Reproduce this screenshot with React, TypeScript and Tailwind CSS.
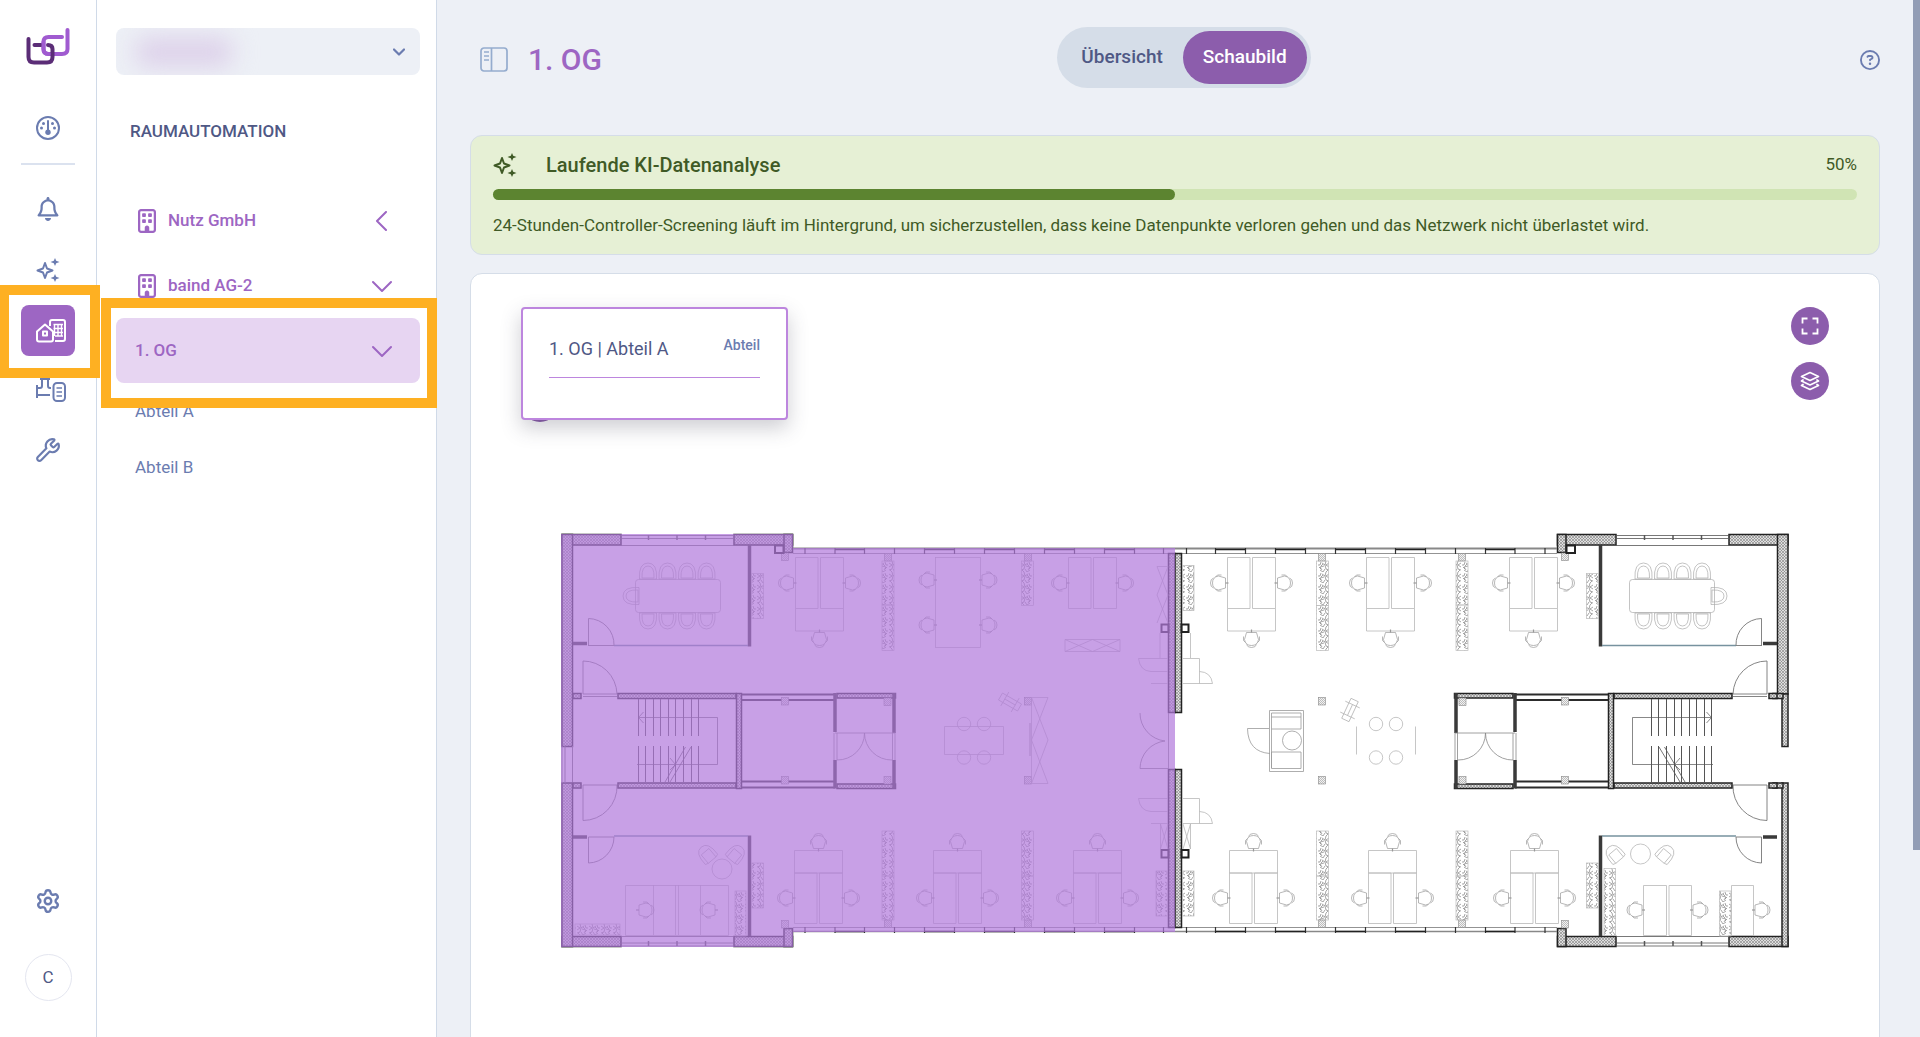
import type { ReactNode } from "react";
import { Settings, Wrench } from "lucide-react";
import { FaRegBell, FaRegBuilding, FaRegCircleQuestion } from "react-icons/fa6";

const Logo = () => (
    <svg width="44" height="38" viewBox="0 0 44 38" fill="none" strokeWidth="4" strokeLinecap="round" strokeLinejoin="round">
        <path d="M36 9H22.500Q17.500 9 17.500 14V21Q17.500 26 22.500 26H36Q41.500 26 41.500 21V2" stroke="#a05bd0" />
        <path d="M2.500 11V29Q2.500 34.500 8 34.500H21Q26.500 34.500 26.500 29V21Q26.500 17 22 17" stroke="#5b2d77" />
        <path d="M8.500 17H15" stroke="#5b2d77" />
        <path d="M17.500 14V21Q17.500 26 22.500 26" stroke="#a05bd0" />
    </svg>
);

const GaugeIcon = () => (
    <svg width="24" height="24" viewBox="0 0 24 24" fill="none" stroke="currentColor">
        <circle cx="12" cy="12" r="11" strokeWidth="2" />
        <path d="M12 5v10" strokeWidth="2" strokeLinecap="round" />
        <g fill="currentColor" stroke="none">
            <circle cx="12" cy="16.200" r="2.700" />
            <circle cx="7.500" cy="7.500" r="1.500" />
            <circle cx="16.500" cy="7.500" r="1.500" />
            <circle cx="5.500" cy="12" r="1.500" />
            <circle cx="18.500" cy="12" r="1.500" />
        </g>
    </svg>
);

const SparklesIcon = () => (
    <svg width="24" height="24" viewBox="0 0 24 24" fill="none" stroke="currentColor" strokeLinejoin="round">
        <path d="M9 5 L11 10.500 L16.500 12.500 L11 14.500 L9 20 L7 14.500 L1.500 12.500 L7 10.500 Z" strokeWidth="2" />
        <g fill="currentColor" stroke="none">
            <path d="M19 0l1.200 2.800L23.500 4l-3.300 1.200L19 8l-1.200-2.800L14.500 4l3.300-1.200z" />
            <path d="M19 16l1.200 2.800 3.300 1.200-3.300 1.200L19 24l-1.200-2.800-3.300-1.200 3.300-1.200z" />
        </g>
    </svg>
);

const HomesIcon = () => (
    <svg width="30" height="24" viewBox="0 0 30 24" fill="none" stroke="currentColor" strokeWidth="2" strokeLinejoin="round">
        <path d="M14 7V3q0-2 2-2h11q2 0 2 2v17q0 2-2 2h-8" />
        <path d="M1 12.500L9 5.500L17 12.500V20.500Q17 22.500 15 22.500H3Q1 22.500 1 20.500Z" />
        <rect x="7" y="12.500" width="4" height="4" />
        <path d="M18.500 5v12M22 5v12M25.500 5v12M17.500 5.500H27M17.500 9.500H27M17.500 13.500H27M19 17H27" strokeWidth="1.400" />
    </svg>
);

const DevicesIcon = () => (
    <svg width="30" height="24" viewBox="0 0 30 24" fill="none" stroke="currentColor" strokeWidth="2">
        <path d="M4 1h10M6 1v7q0 2-2 2H1.500M12 1v7q0 2 2 2h1M1 7v13M1 17h13" />
        <rect x="17.500" y="5" width="11.500" height="18" rx="3.500" />
        <path d="M20.500 10h5.500M20.500 14h5.500M20.500 18h5.500" strokeWidth="1.700" />
    </svg>
);

const SidebarIcon = () => (
    <svg width="28" height="25" viewBox="0 0 28 25" fill="none" stroke="#95acce" strokeWidth="1.700">
        <rect x="1" y="1" width="26" height="23" rx="3" />
        <path d="M11.500 1v23M4 5h5M4 9h5M4 13h5" />
    </svg>
);

const FullscreenIcon = () => (
    <svg width="18" height="18" viewBox="0 0 18 18" fill="none" stroke="currentColor" strokeWidth="1.800">
        <path d="M1.500 6.500V1.500H6.500M11.500 1.500H16.500V6.500M16.500 11.500V16.500H11.500M6.500 16.500H1.500V11.500" />
    </svg>
);

const LayersIcon = () => (
    <svg width="20" height="20" viewBox="0 0 20 20" fill="none" stroke="currentColor" strokeWidth="1.700" strokeLinejoin="round" strokeLinecap="round">
        <path d="M10 1.500L18.500 5.500L10 9.500L1.500 5.500Z" />
        <path d="M3 9L1.500 10L10 14L18.500 10L17 9" />
        <path d="M3 13.500L1.500 14.500L10 18.500L18.500 14.500L17 13.500" />
    </svg>
);

const Chevron = ({ open }: { open: boolean }) => (
    <svg width="20" height="20" viewBox="0 0 20 20" fill="none" stroke="currentColor" strokeWidth="2" strokeLinecap="round" strokeLinejoin="round">
        <path d={open ? "M1 6L10 15L19 6" : "M14 1L5 10L14 19"} />
    </svg>
);

/* ---------- floor plan ---------- */

type Box = { x: number; y: number; w: number; h: number };

const Wall = ({ x, y, w, h }: Box) => (
    <rect x={x} y={y} width={w} height={h} fill="url(#hatch)" stroke="#222" strokeWidth="1.500" />
);

const Column = ({ x, y }: { x: number; y: number }) => (
    <rect x={x} y={y} width="7" height="7.500" fill="url(#diag)" stroke="#888" strokeWidth=".6" />
);

const Plants = ({ x, y, w, h }: Box) => (
    <rect x={x} y={y} width={w} height={h} fill="url(#plants)" stroke="#bbb" strokeWidth=".7" />
);

const Chair = ({ x, y, r = 0 }: { x: number; y: number; r?: number }) => (
    <g transform={`translate(${x} ${y}) rotate(${r})`} stroke="#999" strokeWidth=".7">
        <path d="M-5 -6H5L7 1Q6 7 0 7Q-6 7 -7 1Z" />
        <path d="M-5 6Q-4 9 0 9Q4 9 5 6M-8 -2Q-9 3 -6 4M8 -2Q9 3 6 4" />
        <path d="M0 -6V-9" strokeWidth="1.200" />
    </g>
);

const SeatU = ({ x, y, r = 0 }: { x: number; y: number; r?: number }) => (
    <g transform={`translate(${x} ${y}) rotate(${r})`}>
        <path d="M-8.500 8Q-9.500 -8 0 -8Q9.500 -8 8.500 8Z" />
        <path d="M-6 7Q-6.500 -5 0 -5Q6.500 -5 6 7Z" />
    </g>
);

const ArmChair = ({ x, y, r }: { x: number; y: number; r: number }) => (
    <g transform={`translate(${x} ${y}) rotate(${r})`}>
        <path d="M-8 7Q-9 -9 0 -9Q9 -9 8 7L5 8V-3H-5V8Z" />
        <path d="M-5 8H5" />
    </g>
);

const DeskTop = ({ x, front = true }: { x: number; front?: boolean }) => (
    <g>
        <path d={`M${x} 557.500h22.500v51h-22.500zM${x + 25} 557.500h23v51h-23z`} />
        {front && <path d={`M${x} 608.500v22.500h48v-22.500`} />}
        <Chair x={x - 8} y={583} r={90} />
        <Chair x={x + 56} y={583} r={-90} />
        {front && <Chair x={x + 24} y={638.5} />}
    </g>
);

const DeskBottom = ({ x }: { x: number }) => (
    <g>
        <path d={`M${x} 850.500h48v22.500h-48zM${x} 873h22.500v50.500h-22.500zM${x + 25} 873h23v50.500h-23z`} />
        <Chair x={x - 8} y={898} r={90} />
        <Chair x={x + 56} y={898} r={-90} />
        <Chair x={x + 24} y={842.5} r={180} />
    </g>
);

const Stairs = () => (
    <g stroke="#555" strokeWidth="1">
        {[638.5, 645.5, 653.5, 660.5, 668.5, 675.5, 683.5, 691.5, 698.5].map((x) => (
            <path key={x} d={`M${x} 699V736M${x} 746V782`} />
        ))}
        <path d="M717.500 764.500V717.500H638.500M643.500 712L638.500 717.500L643.500 723M637 764.500H717.500M670 758L675.500 764.500L670 770" strokeWidth=".7" />
        <path d="M665 782L685.500 747M670 782L691 747" strokeWidth=".8" />
    </g>
);

const facadeMarks = [805, 835, 864.5, 894.5, 924.5, 954.5, 984.5, 1014.5, 1044.5, 1074.5, 1104.5, 1134.5, 1163.5];
const facadeDark = [835, 924.5, 984.5, 1044.5, 1104.5];

// One wing of the building; the other one is the same wing mirrored.
// thin: slimmer outer wall around the staircase and below it
const Wing = ({ thin, children }: { thin?: boolean; children?: ReactNode }) => (
    <g>
        <Wall x={562} y={534.5} w={59} h={10.5} />
        <Wall x={734} y={534.5} w={58.5} h={10.5} />
        <Wall x={562} y={936.5} w={59} h={10} />
        <Wall x={734} y={936.5} w={58.5} h={10} />
        {thin ? (
            <>
                <Wall x={562} y={534.5} w={10.5} h={159.5} />
                <Wall x={562} y={694} w={6} h={52.5} />
                <Wall x={562} y={783} w={6} h={163.5} />
                <Wall x={567} y={693.5} w={10} h={5} />
                <Wall x={567} y={783} w={10} h={5} />
            </>
        ) : (
            <>
                <Wall x={562} y={534.5} w={10.5} h={212} />
                <Wall x={562} y={783} w={10.5} h={163.5} />
                <path d="M562 746V783M565 746V783M572.500 746V783" stroke="#777" strokeWidth="1" />
            </>
        )}
        <Wall x={784} y={534.5} w={8.5} h={18} />
        <Wall x={784} y={928.5} w={8.5} h={18} />
        <Column x={781.5} y={553} />
        <Column x={781.5} y={920.5} />
        <rect x="775" y="545.500" width="8.500" height="7.500" stroke="#222" strokeWidth="2" />

        <g stroke="#555" strokeWidth=".8">
            <path d="M621 535.500H734M621 538.500H734M621 545.500H734M621 936.500H734M621 943H734M621 946H734" />
            <path d="M648.500 535v5M677 535v5M705.500 535v5M648.500 941v5M677 941v5M705.500 941v5" strokeWidth="1.500" />
        </g>
        <path d="M793 548.500H1175" stroke="#888" strokeWidth="2" />
        <path d="M793 553.500H1175M793 927.500H1175" stroke="#777" strokeWidth=".8" />
        <path d="M793 931.500H1175" stroke="#888" strokeWidth="1.700" />
        {facadeMarks.map((x) => (
            <path key={x} d={`M${x} 548V554M${x} 927V933`} stroke="#333" strokeWidth="1.200" />
        ))}
        {facadeDark.map((x) => (
            <path key={x} d={`M${x} 549.500h30M${x} 931.500h30`} stroke="#222" strokeWidth="1.600" />
        ))}

        <path d="M749.500 545V646.500M749.500 835.500V936" stroke="#3a3a3a" strokeWidth="3.500" />
        <path d="M614 645.500H748M614 836H748" stroke="#77929f" strokeWidth="1.600" />
        <path d="M573 643.500H587M573 837H587" stroke="#3a3a3a" strokeWidth="3.500" />
        <path
            d="M588.500 646V618.500A26 26 0 0 1 614 645.500M588.500 645.500H614M583 694V661A34 34 0 0 1 617 694M583 694H617M583 696.500H617M583 785V820.500A34 34 0 0 0 617 785M583 785H617M588.500 837V863A26 26 0 0 0 614 837M588.500 837H614"
            stroke="#777"
            strokeWidth=".9"
        />

        <Wall x={573} y={693.5} w={8} h={5} />
        <Wall x={618} y={693.5} w={118} h={5} />
        <Wall x={573} y={783} w={8} h={5} />
        <Wall x={618} y={783} w={118} h={5} />
        <Wall x={736.5} y={693.5} w={5} h={95} />
        <path d="M742 694.500H835M742 700H835M742 781.500H835M742 787.500H835" stroke="#2c2c2c" strokeWidth="1.900" />
        <Wall x={837} y={693.5} w={58.5} h={4.5} />
        <Wall x={837} y={784} w={58.5} h={4.5} />
        <path d="M835 693V732M835 760V788.500M894 693V733M894 760V788.500" stroke="#3a3a3a" strokeWidth="3.500" />
        <path
            d="M835 733H895M864.500 733A27 27 0 0 1 837 760M864.500 733A27 27 0 0 0 892 760M834 733V760M837 733V760M892.500 733V760M895 733V760"
            stroke="#888"
            strokeWidth=".8"
        />
        <Column x={781.5} y={697.5} />
        <Column x={781.5} y={776.5} />
        <Column x={884} y={698} />
        <Column x={884} y={776.5} />
        <Column x={884.5} y={553.5} />
        <Column x={884.5} y={920} />
        <Column x={1024.5} y={553.5} />
        <Column x={1024.5} y={920} />
        <Column x={1024.5} y={697.5} />
        <Column x={1024.5} y={776.5} />
        <Stairs />

        <Wall x={1168.5} y={553.5} w={6.5} h={159} />
        <Wall x={1168.5} y={769.5} w={6.5} h={158} />
        <rect x="1161.500" y="624.500" width="7" height="7.500" stroke="#222" strokeWidth="2" />
        <rect x="1161.500" y="850" width="7" height="7.500" stroke="#222" strokeWidth="2" />

        <Plants x={751.5} y={573.5} w={12} h={45} />
        <Plants x={751.5} y={863} w={12} h={45} />
        <Plants x={882} y={605} w={12} h={45.5} />
        <Plants x={882} y={561} w={12} h={44} />
        <Plants x={882} y={831} w={12} h={45} />
        <Plants x={882} y={876} w={12} h={44} />
        <Plants x={1021.5} y={561} w={12} h={44.5} />
        <Plants x={1021.5} y={831} w={12} h={45} />
        <Plants x={1021.5} y={876} w={12} h={44} />
        <Plants x={1156} y={871} w={11.5} h={45} />

        <g stroke="#aaa" strokeWidth=".7">
            <rect x="635.500" y="579.500" width="85" height="33" rx="3" />
            {[648, 667.5, 687, 706.5].map((x) => (
                <g key={x}>
                    <SeatU x={x} y={571} />
                    <SeatU x={x} y={621} r={180} />
                </g>
            ))}
            <SeatU x={631} y={596} r={-90} />
        </g>
        {children}
    </g>
);

const FloorPlan = () => (
    <svg viewBox="471 520 1408 440" className="block w-full" fill="none" stroke="#b8b8b8" strokeWidth=".8" role="img" aria-label="Grundriss 1. OG">
        <defs>
            <pattern id="hatch" width="3" height="3" patternUnits="userSpaceOnUse">
                <rect width="3" height="3" fill="#dedede" stroke="none" />
                <path d="M0 0L3 3M3 0L0 3" stroke="#808080" strokeWidth=".6" />
            </pattern>
            <pattern id="diag" width="2" height="2" patternUnits="userSpaceOnUse">
                <rect width="2" height="2" fill="#f2f2f2" stroke="none" />
                <path d="M0 2L2 0" stroke="#999" strokeWidth=".6" />
            </pattern>
            <pattern id="plants" width="12" height="11" patternUnits="userSpaceOnUse">
                <path
                    d="M1 2l3 2l-3 2M4 0l1 4l3-2M5 4l-1 4l-3 1M6 5l4 1l-2 3M9 1l1 3l2 0M10 9l-3 2M5 8l2 3M11 6l-2 2M2 9l2 2M7 3l2 2"
                    stroke="#808080"
                    strokeWidth=".7"
                />
            </pattern>
        </defs>

        <Wing />
        <g transform="translate(2350 0) scale(-1 1)">
            <Wing thin>
                <Plants x={1021.5} y={605.5} w={12} h={45} />
                <Plants x={1156} y={565.5} w={11.5} h={45} />
            </Wing>
        </g>

        {/* left wing furniture */}
        <DeskTop x={795.5} />
        <rect x="935.500" y="557.500" width="45" height="90" />
        <Chair x={928} y={580} r={90} />
        <Chair x={988} y={580} r={-90} />
        <Chair x={928} y={625} r={90} />
        <Chair x={988} y={625} r={-90} />
        <DeskTop x={1068.5} front={false} />
        <path d="M1065 639.500H1120V651.500H1065ZM1065 639.500L1092.500 651.500L1120 639.500M1065 651.500L1092.500 639.500L1120 651.500" />
        <path d="M1168 566.500H1157L1168 595L1157 623M1168 566.500L1157 595L1168 623" />
        <DeskBottom x={794.5} />
        <DeskBottom x={933.5} />
        <DeskBottom x={1073.5} />
        <path d="M944.500 726.500H1003.500V754.500H944.500Z" />
        {[964, 984, 1376, 1396].map((x) => (
            <g key={x}>
                <circle cx={x} cy="724" r="6.700" />
                <circle cx={x} cy="757.500" r="6.700" />
            </g>
        ))}
        <path d="M1031.500 697.500H1048M1031.500 783.500H1048M1031.500 697.500L1048 740L1031.500 783.500M1048 697.500L1031.500 740L1048 783.500M1031.500 697.500V783.500" />
        <path d="M1030 723V756" stroke="#888" />
        <g transform="translate(1010 702) rotate(30)">
            <path d="M-11 -4H11V4H-11ZM-6 -8V8M6 -8V8M-6 0H6" />
        </g>
        <path d="M625.500 885.500H728.500V935.500H625.500ZM653.500 885V935M675.500 885V935M678.500 885V935M700.500 885V935" />
        <Chair x={645} y={910} r={-90} />
        <Chair x={709} y={910} r={90} />
        <Plants x={575} y={924} w={45} h={11} />
        <Plants x={735} y={891} w={11} h={45} />
        <ArmChair x={707} y={854} r={-40} />
        <ArmChair x={736} y={854} r={40} />
        <circle cx="722" cy="869" r="10" />
        <path d="M1140 713A28 28 0 0 0 1165 741A28 28 0 0 0 1140 768.500H1168M1168.500 713V769" stroke="#777" />

        {/* right wing furniture */}
        <DeskTop x={1227.5} />
        <DeskTop x={1366.5} />
        <DeskTop x={1509.5} />
        <DeskBottom x={1229.5} />
        <DeskBottom x={1368.5} />
        <DeskBottom x={1510.5} />
        <path d="M1356.500 726.500V754.500M1415.500 726.500V754.500" />
        <g transform="translate(1350 710) rotate(-65)">
            <path d="M-11 -4H11V4H-11ZM-6 -8V8M6 -8V8M-6 0H6" />
        </g>
        <g stroke="#999">
            <path d="M1269.500 710.500H1303.500V771.500H1269.500ZM1271.500 713H1301V729H1271.500ZM1271.500 717H1301M1271.500 752H1301V768.500H1271.500ZM1271.500 729V768" />
            <circle cx="1292" cy="740.500" r="9.500" />
            <path d="M1269 728.500H1247.500Q1248 752 1270 753.500" />
        </g>
        <ArmChair x={1614.5} y={854} r={-40} />
        <ArmChair x={1665.5} y={854} r={40} />
        <circle cx="1640.500" cy="854" r="10" />
        <Plants x={1604} y={868.5} w={11.5} h={67} />
        <path d="M1643.500 885.500H1666.500V935.500H1643.500ZM1669 885.500H1691.500V935.500H1669ZM1731.500 885.500H1753.500V935.500H1731.500Z" />
        <Chair x={1636} y={910} r={90} />
        <Chair x={1699} y={910} r={-90} />
        <Plants x={1719.5} y={891} w={11.5} h={45} />
        <Chair x={1761} y={910} r={-90} />

        {/* cupboards on both sides of the dividing wall */}
        <path d="M1168 658.500H1138.500Q1140 671 1151 671.500H1168M1151 683.500H1168M1183 658.500H1199.500V683.500M1183 683.500H1212.500Q1211 672 1199.500 671.500M1190.500 633V658M1160 633V658" />
        <path d="M1168 798.500H1138.500Q1140 811 1151 811.500H1168M1151 823.500H1168M1183 798.500H1199.500V823.500M1183 823.500H1212.500Q1211 812 1199.500 811.500M1183 824L1190.500 849M1190.500 824L1183 849M1190.500 824V849M1160.500 824V849M1160.500 824L1168 849M1168 824L1160.500 849" />

        <path d="M561 534H793V548H1175V932H793V947H561Z" fill="#b279dc" fillOpacity=".71" stroke="none" />
    </svg>
);

/* ---------- page ---------- */

const RailButton = ({ label, active, children }: { label: string; active?: boolean; children: ReactNode }) => (
    <button
        type="button"
        aria-label={label}
        className={`flex h-[51px] w-[54px] items-center justify-center rounded-lg ${active ? "bg-[#9d66c3] pl-1.5 text-white" : "text-[#6b7cb0]"}`}
    >
        {children}
    </button>
);

const RoundButton = ({ label, children }: { label: string; children?: ReactNode }) => (
    <button type="button" aria-label={label} className="flex size-[38px] items-center justify-center rounded-full bg-[#8c5dac] text-white">
        {children}
    </button>
);

const buildings = [
    { name: "Nutz GmbH", open: false },
    { name: "baind AG-2", open: true },
];

export default function App() {
    return (
        <div className="flex h-screen overflow-hidden bg-[#edf0f6] font-[Roboto,sans-serif] text-[#4f5885]">
            <nav className="relative z-10 flex w-[97px] shrink-0 flex-col items-center border-r border-[#d0dae8] bg-white pt-7 pb-9">
                <Logo />
                <div className="mt-9 flex flex-col items-center gap-2.5">
                    <RailButton label="Dashboard"><GaugeIcon /></RailButton>
                    <hr className="mb-2 w-[54px] border-t-2 border-[#dbe2ef]" />
                    <RailButton label="Meldungen"><FaRegBell size={24} /></RailButton>
                    <RailButton label="KI"><SparklesIcon /></RailButton>
                    <div className="relative">
                        <RailButton label="Raumautomation" active><HomesIcon /></RailButton>
                        <div className="pointer-events-none absolute -top-5 -right-[25px] -bottom-[22px] -left-[22px] border-10 border-[#feb022]" />
                    </div>
                    <div className="flex h-12 items-center pl-1.5 text-[#6b7cb0]">
                        <button type="button" aria-label="Geräte"><DevicesIcon /></button>
                    </div>
                    <RailButton label="Wartung"><Wrench size={26} /></RailButton>
                </div>
                <div className="mt-auto flex flex-col items-center gap-7">
                    <RailButton label="Einstellungen"><Settings size={26} strokeWidth={2.2} /></RailButton>
                    <button type="button" className="size-[47px] rounded-full border border-[#e4e6f0] text-[17px]">C</button>
                </div>
            </nav>

            <aside className="w-[340px] shrink-0 border-r border-[#d0dae8] bg-white px-4 pt-7">
                <div className="pl-[3px]">
                    <button type="button" aria-label="Mandant wählen" className="flex h-[47px] w-full items-center justify-between overflow-hidden rounded-lg bg-[#edf0f6] pr-[15px] pl-5 text-[#6b7cb0]">
                        <span className="h-7 w-24 rounded-lg bg-[#dccfe9] blur-md" />
                        <svg width="12" height="8" viewBox="0 0 12 8" fill="none" stroke="currentColor" strokeWidth="2.200" strokeLinecap="round" strokeLinejoin="round">
                            <path d="M1 1.500L6 6.500L11 1.500" />
                        </svg>
                    </button>
                    <h2 className="mt-11 px-3.5 text-[17px] leading-6 font-medium">RAUMAUTOMATION</h2>
                    <ul className="mt-[45px] text-[17px] font-medium text-[#9d66c3]">
                        {buildings.map((b) => (
                            <li key={b.name}>
                                <button type="button" className="flex h-[65px] w-full items-center pr-7 pl-[22px]">
                                    <FaRegBuilding size={24} className="-mx-[3px]" />
                                    <span className="pl-3">{b.name}</span>
                                    <span className="ml-auto"><Chevron open={b.open} /></span>
                                </button>
                            </li>
                        ))}
                        <li className="relative">
                            <button type="button" className="flex h-[65px] w-full items-center justify-between rounded-lg bg-[#e7d5f2] pr-7 pl-[19px]">
                                1. OG
                                <Chevron open />
                            </button>
                            <div className="pointer-events-none absolute -top-5 -right-[17px] -bottom-[25px] -left-[15px] border-10 border-[#feb022]" />
                        </li>
                    </ul>
                    <ul className="px-[19px] pt-px text-[17px] text-[#6b7cb0]">
                        <li className="flex h-14 items-center"><a href="#abteil-a">Abteil A</a></li>
                        <li className="flex h-14 items-center"><a href="#abteil-b">Abteil B</a></li>
                    </ul>
                </div>
            </aside>

            <main className="min-w-0 flex-1 overflow-y-auto px-[33px] pt-[27px] [scrollbar-width:none]">
                <header className="flex items-center">
                    <div className="flex flex-1 items-center gap-5 pt-1 pl-2.5">
                        <button type="button" aria-label="Seitenleiste"><SidebarIcon /></button>
                        <h1 className="text-3xl leading-10 font-medium text-[#9d66c3]">1. OG</h1>
                    </div>
                    <div className="ml-2 flex rounded-full bg-[#d5dde8] p-1 text-[19px] font-medium">
                        <button type="button" className="h-[53px] px-5">Übersicht</button>
                        <button type="button" className="h-[53px] rounded-full bg-[#8c5dac] px-5 text-white">Schaubild</button>
                    </div>
                    <div className="flex flex-1 justify-end pt-1">
                        <button type="button" aria-label="Hilfe" className="text-[#6b7cb0]"><FaRegCircleQuestion size={20} /></button>
                    </div>
                </header>

                <section className="mt-[47px] rounded-xl border border-[#d5dde8] bg-[#e6f0d5] px-[22px] pt-[15px] pb-4 text-[#3f5a26]">
                    <div className="flex h-7 items-center">
                        <SparklesIcon />
                        <h2 className="pl-[29px] text-xl font-medium">Laufende KI-Datenanalyse</h2>
                        <span className="ml-auto text-[17px]">50%</span>
                    </div>
                    <div className="mt-2.5 h-[11px] rounded-full bg-[#d0e4b4]">
                        <div className="h-full rounded-full bg-[#5c8430]" style={{ width: "50%" }} />
                    </div>
                    <p className="mt-3 text-[17px] leading-[26px]">
                        24-Stunden-Controller-Screening läuft im Hintergrund, um sicherzustellen, dass keine Datenpunkte verloren gehen und das Netzwerk nicht überlastet wird.
                    </p>
                </section>

                <section className="mt-[18px] rounded-xl border border-[#d5dde8] bg-white pb-40">
                    <div className="flex h-[246px] justify-between px-[50px] pt-[33px]">
                        <div className="relative">
                            <div className="flex h-[115px] flex-col justify-end">
                                <RoundButton label="Zurück" />
                            </div>
                            <div className="absolute top-0 left-0 h-[113px] w-[267px] rounded border-2 border-[#bd86de] bg-white px-[26px] pt-6 shadow-[0_8px_20px_rgba(60,60,80,0.25)]">
                                <div className="flex items-start justify-between border-b border-[#bd86de] pb-4">
                                    <span className="pt-1 text-lg leading-6">1. OG | Abteil A</span>
                                    <span className="text-sm leading-6 font-medium text-[#6b7cb0]">Abteil</span>
                                </div>
                            </div>
                        </div>
                        <div className="flex flex-col gap-[17px]">
                            <RoundButton label="Vollbild"><FullscreenIcon /></RoundButton>
                            <RoundButton label="Ebenen"><LayersIcon /></RoundButton>
                        </div>
                    </div>
                    <FloorPlan />
                </section>
            </main>
            <div className="w-[7px] shrink-0">
                <div className="h-[82%] bg-[#929db5]" />
            </div>
        </div>
    );
}
